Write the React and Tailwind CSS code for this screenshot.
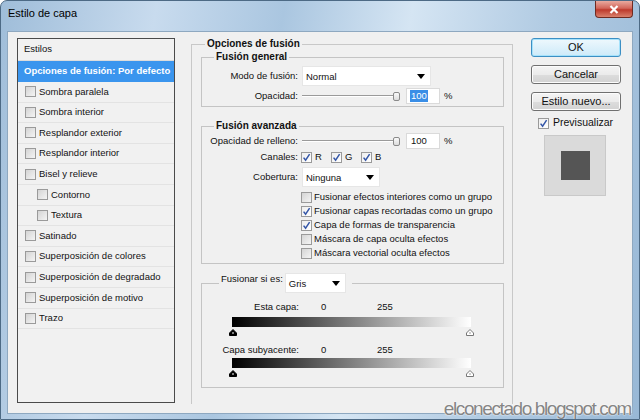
import React from "react";

const font = "font-['Liberation_Sans',Arial,sans-serif]";

const estilos = [
  ["Sombra paralela", false],
  ["Sombra interior", false],
  ["Resplandor exterior", false],
  ["Resplandor interior", false],
  ["Bisel y relieve", false],
  ["Contorno", true],
  ["Textura", true],
  ["Satinado", false],
  ["Superposición de colores", false],
  ["Superposición de degradado", false],
  ["Superposición de motivo", false],
  ["Trazo", false],
];

const opciones = [
  ["Fusionar efectos interiores como un grupo", false],
  ["Fusionar capas recortadas como un grupo", true],
  ["Capa de formas de transparencia", true],
  ["Máscara de capa oculta efectos", false],
  ["Máscara vectorial oculta efectos", false],
];

const Check = ({ checked }) => (
  <span
    className={`w-[11px] h-[11px] shrink-0 border border-[#9a9a9a] flex items-center justify-center ${
      checked ? "bg-[linear-gradient(135deg,#eeeeee,#ffffff)]" : "bg-[linear-gradient(135deg,#d4d4d4,#f4f4f4)]"
    }`}
  >
    {checked && (
      <svg width="9" height="9" viewBox="0 0 9 9">
        <path d="M1.6 4.6 L3.6 7.2 L7.6 1.2" stroke="#3557a8" strokeWidth="1.5" fill="none" />
      </svg>
    )}
  </span>
);

const Arrow = () => (
  <svg width="8" height="5" viewBox="0 0 8 5" className="shrink-0">
    <path d="M0 0 H8 L4 5 Z" fill="#000" />
  </svg>
);

const Select = ({ value, w }) => (
  <div className={`${w} h-[20px] bg-white border border-[#e6e6e6] flex items-center pl-[3px] pr-[5px] justify-between`}>
    <span className="mt-[2px]">{value}</span>
    <Arrow />
  </div>
);

const Slider = ({ selected }) => (
  <div className="flex items-center">
    <div className="flex items-center w-[98px] h-[16px]">
      <div className="flex-1 h-[2px] border-t border-[#9a9a9a] border-b border-b-white" />
      <div className="w-[7px] h-[9px] shrink-0 border border-[#8a8a8a] rounded-[2px] bg-[linear-gradient(#fafafa,#dcdcdc)]" />
    </div>
    <div className="ml-[6px] w-[34px] h-[16px] bg-white border border-[#dadada] flex items-center pl-[3px]">
      <span className={selected ? "bg-[#3a8ee6] text-white px-[1px] leading-[12px]" : "pl-[1px]"}>100</span>
    </div>
    <span className="ml-[4px]">%</span>
  </div>
);

const Handle = ({ dark }) => (
  <svg width="8" height="7" viewBox="0 0 8 7">
    <path d="M4 0.5 L7.5 4 V6.5 H0.5 V4 Z" fill={dark ? "#000" : "#fff"} stroke={dark ? "#000" : "#777"} strokeWidth="1" />
    <rect x="3.5" y="3" width="1" height="2" fill={dark ? "#fff" : "#999"} />
  </svg>
);

const Bar = ({ label }) => (
  <div className="flex items-center h-[14px]">
    <span className="w-[97px] text-right">{label}</span>
    <span className="ml-[22px] w-[56px]">0</span>
    <span>255</span>
  </div>
);

const Btn = ({ children, primary }) => (
  <div
    className={`h-[19px] w-[90px] rounded-[3px] border flex items-center justify-center text-[11px] ${
      primary
        ? "border-[#3c8fc4] bg-[linear-gradient(#eef8fd,#cdeaf9)] shadow-[inset_0_0_0_1px_#a6e2fb]"
        : "border-[#707070] bg-[linear-gradient(#f4f4f4_0%,#ebebeb_50%,#dddddd_51%,#d2d2d2_100%)] shadow-[inset_0_0_0_1px_#fcfcfc]"
    }`}
  >
    {children}
  </div>
);

export default function App() {
  return (
    <div className={`relative w-[640px] h-[420px] overflow-hidden rounded-t-[7px] border border-[#4d6a85] bg-[linear-gradient(100deg,#9fbdd9_0%,#c8dbee_22%,#aac6e0_40%,#d5e5f3_58%,#b0cae2_78%,#98b8d6_100%)] text-[9.5px] text-[#111] ${font}`}>
      <div className="h-[30px] flex items-start">
        <span className="pl-[7px] pt-[4px] text-[11px] text-black">Estilo de capa</span>
        <div className="ml-auto mr-[6px] w-[38px] h-[17px] rounded-b-[4px] border border-t-0 border-[#6e2b22] bg-[linear-gradient(#e9aa9f_0%,#d2665a_45%,#bd3a2c_55%,#d9806c_100%)] flex items-center justify-center">
          <svg width="10" height="9" viewBox="0 0 10 9">
            <path d="M1.5 1 L8.5 8 M8.5 1 L1.5 8" stroke="#fff" strokeWidth="2.2" />
          </svg>
        </div>
      </div>

      <div className="mx-[6px] h-[383px] bg-[#f0f0f0] border border-[#8ea8c0] flex pt-[6px] pl-[9px]">
        {/* lista de estilos */}
        <div className="w-[158px] h-[365px] border border-[#4a4a4a] bg-[#f1f1f1] flex flex-col">
          <div className="h-[22px] shrink-0 pl-[6px] flex items-center border-b border-[#dcdcdc]">Estilos</div>
          <div className="h-[21px] shrink-0 pl-[6px] flex items-center bg-[#3a95ee] text-white font-bold">
            Opciones de fusión: Por defecto
          </div>
          {estilos.map(([name, sub]) => (
            <div
              key={name}
              className={`h-[20.6px] shrink-0 border-b border-[#e3e3e3] flex items-center gap-[3px] ${sub ? "pl-[19px]" : "pl-[7px]"}`}
            >
              <Check />
              <span>{name}</span>
            </div>
          ))}
        </div>

        {/* opciones de fusión */}
        <fieldset className="ml-[16px] w-[322px] h-[366px] border border-[#c8c8c8] border-b-0">
          <legend className="ml-[13px] px-[2px] font-bold leading-[12px] text-[10px]">Opciones de fusión</legend>

          <fieldset className="ml-[9px] mt-[1px] w-[303px] border border-[#c4c4c4] pb-[2px]">
            <legend className="ml-[12px] px-[2px] font-bold leading-[12px] text-[10px]">Fusión general</legend>
            <div className="flex items-center mt-[3px]">
              <span className="w-[96px] text-right">Modo de fusión:</span>
              <div className="ml-[4px]">
                <Select value="Normal" w="w-[129px]" />
              </div>
            </div>
            <div className="flex items-center mt-[2px] h-[16px]">
              <span className="w-[96px] text-right">Opacidad:</span>
              <div className="ml-[4px]">
                <Slider selected />
              </div>
            </div>
          </fieldset>

          <fieldset className="ml-[9px] mt-[13px] w-[303px] border border-[#c4c4c4] pb-[3px]">
            <legend className="ml-[12px] px-[2px] font-bold leading-[12px] text-[10px]">Fusión avanzada</legend>
            <div className="flex items-center mt-[1px] h-[16px]">
              <span className="w-[96px] text-right">Opacidad de relleno:</span>
              <div className="ml-[4px]">
                <Slider />
              </div>
            </div>
            <div className="flex items-center mt-[1px] h-[14px]">
              <span className="w-[96px] text-right">Canales:</span>
              <div className="ml-[3px] flex items-center">
                {["R", "G", "B"].map((c) => (
                  <div key={c} className="w-[30px] flex items-center gap-[3px]">
                    <Check checked />
                    <span>{c}</span>
                  </div>
                ))}
              </div>
            </div>
            <div className="flex items-center mt-[3px]">
              <span className="w-[96px] text-right">Cobertura:</span>
              <div className="ml-[4px]">
                <Select value="Ninguna" w="w-[78px]" />
              </div>
            </div>
            <div className="mt-[3px] ml-[99px] flex flex-col">
              {opciones.map(([t, c]) => (
                <div key={t} className="h-[14px] flex items-center gap-[2px] whitespace-nowrap">
                  <Check checked={c} />
                  <span>{t}</span>
                </div>
              ))}
            </div>
          </fieldset>

          <fieldset className="ml-[9px] mt-[9px] w-[303px] border border-[#c4c4c4] pb-[10px]">
            <legend className="ml-[17px] pl-[2px] pr-[6px]">
              <div className="flex items-center">
                <span className="-mt-[8px]">Fusionar si es:</span>
                <div className="ml-[2px]">
                  <Select value="Gris" w="w-[61px]" />
                </div>
              </div>
            </legend>
            <div className="pt-[7px]">
              <Bar label="Esta capa:" />
            </div>
            <div className="ml-[30px] mt-[3px] w-[239px] h-[10px] bg-[linear-gradient(to_right,#000,#fff)]" />
            <div className="ml-[27px] mt-[2px] w-[245px] flex justify-between">
              <Handle dark />
              <Handle />
            </div>
            <div className="mt-[7px]">
              <Bar label="Capa subyacente:" />
            </div>
            <div className="ml-[30px] mt-[1px] w-[239px] h-[10px] bg-[linear-gradient(to_right,#000,#fff)]" />
            <div className="ml-[27px] mt-[2px] w-[245px] flex justify-between">
              <Handle dark />
              <Handle />
            </div>
          </fieldset>
        </fieldset>

        {/* botones */}
        <div className="ml-[18px] flex flex-col">
          <Btn primary>OK</Btn>
          <div className="mt-[8px]">
            <Btn>Cancelar</Btn>
          </div>
          <div className="mt-[8px]">
            <Btn>Estilo nuevo...</Btn>
          </div>
          <div className="mt-[5px] pl-[7px] h-[14px] flex items-center gap-[4px] text-[10.5px]">
            <Check checked />
            <span>Previsualizar</span>
          </div>
          <div className="mt-[5px] ml-[13px] w-[62px] h-[61px] bg-[#dadada] border border-[#c9c9c9] flex items-center justify-center">
            <div className="w-[29px] h-[29px] bg-[#555555]" />
          </div>
        </div>
      </div>

      <span className="absolute right-[8px] bottom-[0px] text-[19px] tracking-[-1.4px] leading-[20px] text-[#858585] [text-shadow:0_0_2px_#fff,0_0_1px_#fff]">
        elconectado.blogspot.com
      </span>
    </div>
  );
}
